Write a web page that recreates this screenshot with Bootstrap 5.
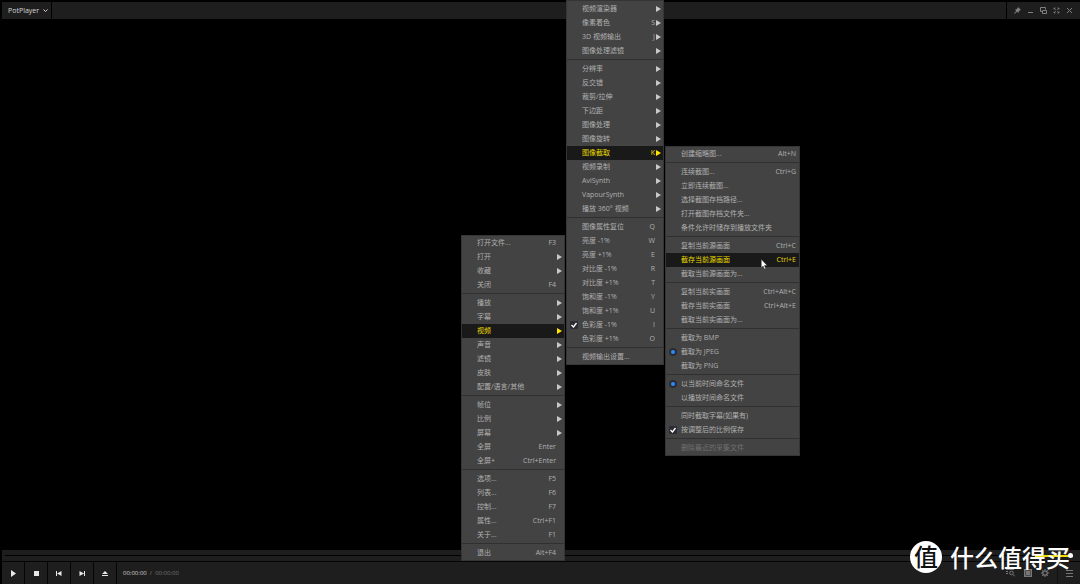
<!DOCTYPE html>
<html lang="zh-CN">
<head>
<meta charset="utf-8">
<meta name="viewport" content="width=device-width, initial-scale=1">
<title>PotPlayer</title>
<link href="https://cdn.jsdelivr.net/npm/bootstrap@5.3.0/dist/css/bootstrap.min.css" rel="stylesheet">
<style>
  body { background: #000; color: #b0b0b0; font: 7px/14px "Open Sans", "Noto Sans CJK SC", sans-serif; overflow: hidden; }
  button { background: none; border: 0; padding: 0; color: inherit; font: inherit; }
  svg { display: block; }
  .titlebar { height: 17px; background: #1e1e1e; margin: 2px 0 0 2px; }
  .app-menu { width: 50px; padding-left: 6px; border-right: 1px solid #000; color: #d8d8d8; }
  .win-tools { border-left: 1px solid #000; padding: 0 4px 0 4px; color: #808080; }
  .win-tools button { width: 13px; display: grid; place-items: center; }
  .player-foot { background: #1e1e1e; margin-left: 2px; }
  .seek-row { height: 12px; border-bottom: 1px solid #050505; padding: 0 7px 0 3px; }
  .foot-row { height: 22px; }
  .foot-row > .ctl { width: 23px; border-right: 1px solid #050505; display: grid; place-items: center; color: #e8e8e8; }
  .clock { font-size: 6px; color: #d4d4d4; padding-left: 6px; }
  .clock span { color: #777; }
  .foot-tools { color: #777; }
  .foot-tools button { width: 17px; display: grid; place-items: center; }
  .foot-tools .list-btn { width: 23px; border-left: 1px solid #111; margin-left: 4px; }
  input[type=range] { -webkit-appearance: none; appearance: none; height: 11px; margin: 0; background: none; }
  .seek::-webkit-slider-runnable-track { height: 1px; background: #000; }
  .seek::-webkit-slider-thumb { -webkit-appearance: none; appearance: none; width: 1px; height: 1px; background: #000; }
  input[type=range].volume { width: 38px; flex: none; background: linear-gradient(#f0dc00, #f0dc00) left center / 100% 2px no-repeat; }
  .volume::-webkit-slider-thumb { -webkit-appearance: none; appearance: none; width: 5px; height: 5px; border-radius: 50%; background: #fff; }
  .popup { position: absolute; background: #434343; border: 1px solid #353535; z-index: 2; }
  .popup-main { left: 461px; bottom: 23px; width: 104px; }
  .popup-video { left: 566px; top: 0; width: 98px; padding-top: 1px; }
  .popup-capture { left: 665px; top: 146px; width: 135px; }
  .popup ul + ul { border-top: 1px solid #303030; margin-top: 1px; padding-top: 2px; }
  .item { display: flex; width: 100%; height: 14px; align-items: center; padding: 0 2px 0 15px; text-align: left; white-space: nowrap; position: relative; line-height: 14px; }
  .item kbd { margin-left: auto; padding: 0 6px 0 0; background: none; color: inherit; font: inherit; }
  .item.has-sub::after { content: ""; margin-left: auto; border: solid transparent; border-width: 3px 0 3px 5px; border-left-color: #c8c8c8; }
  .item.keyed kbd { padding-right: 1px; }
  .item.has-sub.keyed::after { margin-left: 0; }
  .popup-capture .item kbd { padding-right: 1px; }
  .item.active { background: #191919; color: #e8d800; }
  .item.active::after { border-left-color: #ffe600; }
  .item:disabled { color: #707070; }
  .mark-on { position: absolute; left: 3px; top: 3px; width: 8px; height: 8px; }
  .pointer { position: absolute; left: 761px; top: 259px; z-index: 4; }
  .stamp { position: absolute; right: 10px; bottom: 10px; z-index: 5; color: #fff; font: 500 24px/34px "Noto Sans CJK SC", sans-serif; pointer-events: none; }
  .stamp-logo { width: 32px; height: 32px; border-radius: 50%; background: #fff; color: #111; line-height: 30px; text-align: center; margin-right: 8px; }
</style>
<script src="https://cdn.jsdelivr.net/npm/bootstrap@5.3.0/dist/js/bootstrap.bundle.min.js"></script>
</head>
<body class="d-flex flex-column vh-100 position-relative">
<header class="titlebar d-flex">
  <button class="app-menu d-flex align-items-center">PotPlayer
    <svg class="ms-1" width="5" height="5" viewBox="0 0 5 5" fill="none" stroke="currentColor"><path d="M.5 1.500l2 2 2-2"/></svg></button>
  <div class="win-tools d-flex ms-auto">
    <button aria-label="置顶"><svg width="7" height="7" viewBox="0 0 7 7" fill="currentColor"><path d="M4 0l3 3-1 .3-1.200 1.200L4.500 6 3 4.800.5 7 0 6.500 2.200 4 1 2.500l1.500-.3L3.700 1z"/></svg></button>
    <button aria-label="最小化"><svg width="7" height="7" viewBox="0 0 7 7" fill="currentColor"><path d="M1 5h5v1H1z"/></svg></button>
    <button aria-label="还原"><svg width="7" height="7" viewBox="0 0 7 7" fill="none" stroke="currentColor"><path d="M2.500 4.500h-2v-4h5v2M2.500 3.500h4v3h-4z"/></svg></button>
    <button aria-label="全屏"><svg width="7" height="7" viewBox="0 0 7 7" fill="none" stroke="currentColor" stroke-width=".8"><path d="M1 2.500V1h1.500M4.500 1H6v1.500M6 4.500V6H4.500M2.500 6H1V4.500M1 1l1.800 1.800M6 1L4.200 2.800M6 6L4.200 4.200M1 6l1.800-1.800"/></svg></button>
    <button aria-label="关闭"><svg width="7" height="7" viewBox="0 0 7 7" fill="none" stroke="currentColor"><path d="M1 1l5 5M6 1L1 6"/></svg></button>
  </div>
</header>

<main class="flex-grow-1"></main>

<footer class="player-foot">
  <div class="seek-row d-flex align-items-center">
    <input class="seek flex-grow-1" type="range" value="0" aria-label="进度">
    <input class="volume" type="range" value="100" aria-label="音量">
  </div>
  <div class="foot-row d-flex align-items-stretch">
    <button class="ctl" aria-label="播放"><svg width="7" height="7" viewBox="0 0 7 7" fill="currentColor"><path d="M1 0l5 3.500-5 3.500z"/></svg></button>
    <button class="ctl" aria-label="停止"><svg width="5" height="5" viewBox="0 0 5 5" fill="currentColor"><path d="M0 0h5v5H0z"/></svg></button>
    <button class="ctl" aria-label="上一个"><svg width="6" height="5" viewBox="0 0 6 5" fill="currentColor"><path d="M0 0h1v5H0zM5.500 0v5L1 2.500z"/></svg></button>
    <button class="ctl" aria-label="下一个"><svg width="6" height="5" viewBox="0 0 6 5" fill="currentColor"><path d="M5 0h1v5H5zM.5 0v5L5 2.500z"/></svg></button>
    <button class="ctl" aria-label="打开"><svg width="6" height="5" viewBox="0 0 6 5" fill="currentColor"><path d="M3 0l3 3H0zM0 4h6v1H0z"/></svg></button>
    <div class="clock d-flex align-items-center">00:00:00&nbsp;<span>&nbsp;/&nbsp; 00:00:00</span></div>
    <div class="foot-tools d-flex ms-auto">
      <button aria-label="搜索"><svg width="9" height="8" viewBox="0 0 9 8" fill="none" stroke="currentColor"><path d="M0 .5h8M0 2.500h2M0 4.500h2M7 5.500l2 2"/><circle cx="5.500" cy="4" r="1.800"/></svg></button>
      <button aria-label="面板"><svg width="8" height="8" viewBox="0 0 8 8" fill="currentColor"><path fill-rule="evenodd" d="M0 0h8v8H0zM1.500 1.500v5h5v-5z"/><path d="M2 2h4v4H2z"/></svg></button>
      <button aria-label="设置"><svg width="8" height="8" viewBox="0 0 8 8" fill="none" stroke="currentColor"><circle cx="4" cy="4" r="2.200" stroke-width="1.300"/><path d="M4 0v1.500M4 6.500V8M0 4h1.500M6.500 4H8M1.200 1.200l1 1M5.800 5.800l1 1M6.800 1.200l-1 1M2.200 5.800l-1 1"/></svg></button>
      <button class="list-btn" aria-label="播放列表"><svg width="7" height="7" viewBox="0 0 7 7" fill="currentColor"><path d="M0 0h7v1H0zM0 3h7v1H0zM0 6h7v1H0z"/></svg></button>
    </div>
  </div>
</footer>

<nav class="popup popup-main" aria-label="主菜单">
  <ul class="list-unstyled mb-0">
    <li><button class="item">打开文件...<kbd>F3</kbd></button></li>
    <li><button class="item has-sub">打开</button></li>
    <li><button class="item has-sub">收藏</button></li>
    <li><button class="item">关闭<kbd>F4</kbd></button></li>
  </ul>
  <ul class="list-unstyled mb-0">
    <li><button class="item has-sub">播放</button></li>
    <li><button class="item has-sub">字幕</button></li>
    <li><button class="item has-sub active">视频</button></li>
    <li><button class="item has-sub">声音</button></li>
    <li><button class="item has-sub">滤镜</button></li>
    <li><button class="item has-sub">皮肤</button></li>
    <li><button class="item has-sub">配置/语言/其他</button></li>
  </ul>
  <ul class="list-unstyled mb-0">
    <li><button class="item has-sub">帧位</button></li>
    <li><button class="item has-sub">比例</button></li>
    <li><button class="item has-sub">屏幕</button></li>
    <li><button class="item">全屏<kbd>Enter</kbd></button></li>
    <li><button class="item">全屏+<kbd>Ctrl+Enter</kbd></button></li>
  </ul>
  <ul class="list-unstyled mb-0">
    <li><button class="item">选项...<kbd>F5</kbd></button></li>
    <li><button class="item">列表...<kbd>F6</kbd></button></li>
    <li><button class="item">控制...<kbd>F7</kbd></button></li>
    <li><button class="item">属性...<kbd>Ctrl+F1</kbd></button></li>
    <li><button class="item">关于...<kbd>F1</kbd></button></li>
  </ul>
  <ul class="list-unstyled mb-0">
    <li><button class="item">退出<kbd>Alt+F4</kbd></button></li>
  </ul>
</nav>

<nav class="popup popup-video" aria-label="视频">
  <ul class="list-unstyled mb-0">
    <li><button class="item has-sub">视频渲染器</button></li>
    <li><button class="item has-sub keyed">像素着色<kbd>S</kbd></button></li>
    <li><button class="item has-sub keyed">3D 视频输出<kbd>J</kbd></button></li>
    <li><button class="item has-sub">图像处理滤镜</button></li>
  </ul>
  <ul class="list-unstyled mb-0">
    <li><button class="item has-sub">分辨率</button></li>
    <li><button class="item has-sub">反交错</button></li>
    <li><button class="item has-sub">裁剪/拉伸</button></li>
    <li><button class="item has-sub">下边距</button></li>
    <li><button class="item has-sub">图像处理</button></li>
    <li><button class="item has-sub">图像旋转</button></li>
    <li><button class="item has-sub keyed active">图像截取<kbd>K</kbd></button></li>
    <li><button class="item has-sub">视频录制</button></li>
    <li><button class="item has-sub">AviSynth</button></li>
    <li><button class="item has-sub">VapourSynth</button></li>
    <li><button class="item has-sub">播放 360° 视频</button></li>
  </ul>
  <ul class="list-unstyled mb-0">
    <li><button class="item">图像属性复位<kbd>Q</kbd></button></li>
    <li><button class="item">亮度 -1%<kbd>W</kbd></button></li>
    <li><button class="item">亮度 +1%<kbd>E</kbd></button></li>
    <li><button class="item">对比度 -1%<kbd>R</kbd></button></li>
    <li><button class="item">对比度 +1%<kbd>T</kbd></button></li>
    <li><button class="item">饱和度 -1%<kbd>Y</kbd></button></li>
    <li><button class="item">饱和度 +1%<kbd>U</kbd></button></li>
    <li><button class="item"><svg class="mark-on" viewBox="0 0 8 8"><rect width="8" height="8" rx="1" fill="#2b2b33"/><path d="M1.500 4l2 2 3-4" fill="none" stroke="#fff" stroke-width="1.300"/></svg>色彩度 -1%<kbd>I</kbd></button></li>
    <li><button class="item">色彩度 +1%<kbd>O</kbd></button></li>
  </ul>
  <ul class="list-unstyled mb-0">
    <li><button class="item">视频输出设置...</button></li>
  </ul>
</nav>

<nav class="popup popup-capture" aria-label="图像截取">
  <ul class="list-unstyled mb-0">
    <li><button class="item">创建缩略图...<kbd>Alt+N</kbd></button></li>
  </ul>
  <ul class="list-unstyled mb-0">
    <li><button class="item">连续截图...<kbd>Ctrl+G</kbd></button></li>
    <li><button class="item">立即连续截图...</button></li>
    <li><button class="item">选择截图存档路径...</button></li>
    <li><button class="item">打开截图存档文件夹...</button></li>
    <li><button class="item">条件允许时储存到播放文件夹</button></li>
  </ul>
  <ul class="list-unstyled mb-0">
    <li><button class="item">复制当前源画面<kbd>Ctrl+C</kbd></button></li>
    <li><button class="item active">截存当前源画面<kbd>Ctrl+E</kbd></button></li>
    <li><button class="item">截取当前源画面为...</button></li>
  </ul>
  <ul class="list-unstyled mb-0">
    <li><button class="item">复制当前实画面<kbd>Ctrl+Alt+C</kbd></button></li>
    <li><button class="item">截存当前实画面<kbd>Ctrl+Alt+E</kbd></button></li>
    <li><button class="item">截取当前实画面为...</button></li>
  </ul>
  <ul class="list-unstyled mb-0">
    <li><button class="item">截取为 BMP</button></li>
    <li><button class="item"><svg class="mark-on" viewBox="0 0 8 8"><circle cx="4" cy="4" r="4" fill="#2b2b33"/><circle cx="4" cy="4" r="2" fill="#2a8cff"/></svg>截取为 JPEG</button></li>
    <li><button class="item">截取为 PNG</button></li>
  </ul>
  <ul class="list-unstyled mb-0">
    <li><button class="item"><svg class="mark-on" viewBox="0 0 8 8"><circle cx="4" cy="4" r="4" fill="#2b2b33"/><circle cx="4" cy="4" r="2" fill="#2a8cff"/></svg>以当前时间命名文件</button></li>
    <li><button class="item">以播放时间命名文件</button></li>
  </ul>
  <ul class="list-unstyled mb-0">
    <li><button class="item">同时截取字幕(如果有)</button></li>
    <li><button class="item"><svg class="mark-on" viewBox="0 0 8 8"><rect width="8" height="8" rx="1" fill="#2b2b33"/><path d="M1.500 4l2 2 3-4" fill="none" stroke="#fff" stroke-width="1.300"/></svg>按调整后的比例保存</button></li>
  </ul>
  <ul class="list-unstyled mb-0">
    <li><button class="item" disabled>删除最近的采集文件</button></li>
  </ul>
</nav>

<svg class="pointer" width="7" height="11" viewBox="0 0 7 11"><path d="M.3.3v8.500l1.800-1.700 1.300 3 1.300-.6-1.300-2.900h2.700z" fill="#fff" stroke="#222" stroke-width=".4"/></svg>

<div class="stamp d-flex align-items-center"><span class="stamp-logo">值</span><span>什么值得买</span></div>
</body>
</html>
